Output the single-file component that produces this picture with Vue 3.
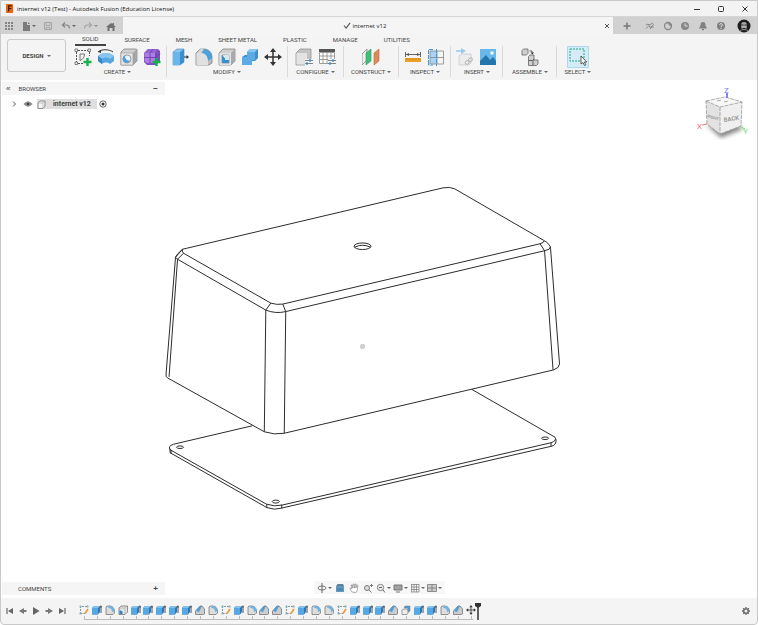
<script setup>
const quick = [
  { id: 'grid', label: 'Data panel' },
  { id: 'file', label: 'File', drop: true },
  { id: 'save', label: 'Save', dim: true },
  { id: 'undo', label: 'Undo', drop: true },
  { id: 'redo', label: 'Redo', drop: true, dim: true },
  { id: 'home', label: 'Home' },
]
const status = [
  { id: 'plus', label: 'New design' },
  { id: 'extensions', label: 'Extensions' },
  { id: 'online', label: 'Online status' },
  { id: 'clock', label: 'Job status' },
  { id: 'bell', label: 'Notifications' },
  { id: 'help', label: 'Help' },
]
const workspaces = ['SOLID', 'SURFACE', 'MESH', 'SHEET METAL', 'PLASTIC', 'MANAGE', 'UTILITIES']
const groups = [
  { name: 'CREATE', icons: ['sketch', 'revolve', 'hole', 'form'], tight: true },
  { name: 'MODIFY', icons: ['press', 'fillet', 'shell', 'combine', 'move'], tight: true },
  { name: 'CONFIGURE', icons: ['config', 'table'] },
  { name: 'CONSTRUCT', icons: ['plane'] },
  { name: 'INSPECT', icons: ['measure', 'section'], tight: true },
  { name: 'INSERT', icons: ['derive', 'image'], tight: true },
  { name: 'ASSEMBLE', icons: ['joint'] },
  { name: 'SELECT', icons: ['select'], tight: true },
]
const nav = [
  { id: 'orbit', drop: true },
  { id: 'look' },
  { id: 'hand' },
  { id: 'zoom' },
  { id: 'fit', drop: true },
  { id: 'display', drop: true },
  { id: 'gridset', drop: true },
  { id: 'views', drop: true },
]
const playback = ['first', 'prev', 'play', 'next', 'last']
const kinds = { s: 't-sketch', e: 't-extrude', f: 't-fillet', h: 't-shell', c: 't-chamfer', o: 't-offset', m: 'move' }
const features = [...'sefheeeeecfsefccseffseeecoeefcm'].map((k) => kinds[k])
</script>

<template>
  <div class="window">
    <svg class="defs" aria-hidden="true">
      <symbol id="grid" viewBox="0 0 10 10"><path d="M1 1h2v2H1zM4 1h2v2H4zM7 1h2v2H7zM1 4h2v2H1zM4 4h2v2H4zM7 4h2v2H7zM1 7h2v2H1zM4 7h2v2H4zM7 7h2v2H7z" fill="#858585" /></symbol>
      <symbol id="file" viewBox="0 0 10 10"><path d="M2 1h4v3h3v6H2z M7 1l2 2H7z" fill="#7b7b7b" /></symbol>
      <symbol id="save" viewBox="0 0 10 10"><path d="M1.500 1.500h7v7h-7zM3 1.500v3h4v-3M3 8.500v-2h4v2" fill="none" stroke="#8a8a8a" /></symbol>
      <symbol id="undo" viewBox="0 0 10 10"><path d="M1.500 4H6q2.500.5 2.500 3.500M4 1.500L1.500 4 4 6.500" fill="none" stroke="#858585" stroke-width="1.200" /></symbol>
      <symbol id="redo" viewBox="0 0 10 10"><path d="M8.500 4H4Q1.500 4.500 1.500 7.500M6 1.500L8.500 4 6 6.500" fill="none" stroke="#8a8a8a" stroke-width="1.200" /></symbol>
      <symbol id="home" viewBox="0 0 10 10"><path d="M0 6l5-4 1.500 1.200V2H8v2.400L10 6H8.500v4h-2V7h-3v3h-2V6z" fill="#707070" /></symbol>
      <symbol id="plus" viewBox="0 0 10 10"><path d="M5 1.500v7M1.500 5h7" stroke="#777" stroke-width="1.500" /></symbol>
      <symbol id="extensions" viewBox="0 0 10 10"><path d="M1 4l2-1 1 1 4-2M1 7.500l3-3 1 2 4-3M5 8l2-2h2" fill="none" stroke="#888" /></symbol>
      <symbol id="online" viewBox="0 0 10 10"><circle cx="5" cy="5" r="3.500" fill="none" stroke="#888" stroke-width="1.300" /><path d="M4 1.500h2.500l2 2V6L6 4z" fill="#888" /></symbol>
      <symbol id="clock" viewBox="0 0 10 10"><circle cx="5" cy="5" r="4" fill="#888" /><path d="M5 2.500V5h2.500" fill="none" stroke="#ddd" /></symbol>
      <symbol id="bell" viewBox="0 0 10 10"><path d="M5 1c2 0 2.500 1.500 2.500 3.500L9 7.500H1l1.500-3C2.500 2.500 3 1 5 1zM4 8h2v1.300H4z" fill="#808080" /></symbol>
      <symbol id="help" viewBox="0 0 10 10"><circle cx="5" cy="5" r="4" fill="#808080" /><path d="M3.700 4c0-2 2.800-1.800 2.600 0C6.200 5 5 5 5 6.200M5 7v1" fill="none" stroke="#e5e5e5" /></symbol>

      <symbol id="sketch" viewBox="0 0 18 18"><path d="M2.500 4v10M4 2.500h10M15.500 4v4M4 15.500h5" fill="none" stroke="#555" stroke-dasharray="2 1" /><path d="M1 1h2.500v2.500H1zM14 1h2.500v2.500H14zM1 14h2.500v2.500H1z" fill="#f4f4f4" stroke="#555" stroke-width=".7" /><path d="M6 12.500V6h4.500c0 3-1.500 5.500-4.500 6.500z" fill="none" stroke="#555" stroke-width=".8" /><path d="M13.500 10v8M9.500 14h8" stroke="#16b04c" stroke-width="2.400" /></symbol>
      <symbol id="revolve" viewBox="0 0 18 18"><path d="M1 4C4 1 12 1 16 4" fill="none" stroke="#333" /><path d="M1 4l3-2v3z" fill="#333" /><path d="M1 8c4-4 12-4 16 0v5l-4 3c-2-2-6-2-8 0l-4-3z" fill="#55a7e2" /><path d="M1 8c4-4 12-4 16 0l-4 3c-2-2-6-2-8 0z" fill="#86c6f0" /><path d="M1 8l4 3v5l-4-3z" fill="#3a86c4" /></symbol>
      <symbol id="hole" viewBox="0 0 18 18"><path d="M1 4l3-3h12q1 0 1 1v11l-4 4H1z" fill="#d0d0d0" stroke="#777" stroke-width=".7" /><path d="M13 5l4-4v12l-4 4z" fill="#a5a5a5" /><path d="M1 5h12v12H1z" fill="#e3e3e3" stroke="#888" stroke-width=".5" /><circle cx="7" cy="11" r="4" fill="#eaf5fc" stroke="#777" stroke-width=".7" /><path d="M5 7.500a3.800 3.800 0 1 0 5 5Q5 13 5 7.500z" fill="#4ba1df" /></symbol>
      <symbol id="form" viewBox="0 0 18 18"><path d="M1 5l4-4h10l2 2v10l-4 4H4l-3-3z" fill="#7d4fc0" /><path d="M1.500 5h11v10h-9l-2-2z" fill="#ae7de4" /><path d="M2 5l3-4h10l-3 4z" fill="#9365d2" /><path d="M1 9.500h12l4-4M7 15V5l3-4M12.700 5v11" fill="none" stroke="#6538aa" stroke-width=".8" /><path d="M13.500 10v8M9.500 14h8" stroke="#16b04c" stroke-width="2.400" /></symbol>
      <symbol id="press" viewBox="0 0 18 18"><path d="M1 4l4-3h7v13l-4 3H1z" fill="#8bc8f1" stroke="#4387b8" stroke-width=".6" /><path d="M1 4h7v13H1z" fill="#6ab5e9" /><path d="M8 4l4-3v13l-4 3z" fill="#3c8ecd" /><path d="M12 9h3" stroke="#333" stroke-width="1" /><path d="M14.500 7L17 9l-2.500 2z" fill="#333" /></symbol>
      <symbol id="fillet" viewBox="0 0 18 18"><path d="M1 5l4-4h4c5 0 8 4 8 8v6l-3 2H1z" fill="#bdbdbd" stroke="#777" stroke-width=".7" /><path d="M1.500 5H6c4 0 7 3 7 7v5H1.500z" fill="#e0e0e0" /><path d="M8 1h1c5 0 8 4 8 8v1l-4 3c0-5-3-8-6-8z" fill="#4ba1dd" /><path d="M5 1h4L6 5H2z" fill="#d5d5d5" /></symbol>
      <symbol id="shell" viewBox="0 0 18 18"><path d="M1 5l4-4h12v12l-4 4H1z" fill="#cfcfcf" stroke="#777" stroke-width=".7" /><path d="M13 5l4-4v12l-4 4z" fill="#aaa" /><path d="M1.500 5h11.500v12H1.500z" fill="#e3e3e3" /><path d="M4 7h7v8H4z" fill="#fff" stroke="#777" stroke-width=".6" /><path d="M4 7l3 3v2h4v3H4z" fill="#3491d2" /><path d="M7 7h4v5H7z" fill="#d2eaf9" /></symbol>
      <symbol id="combine" viewBox="0 0 18 18"><path d="M6 4l3-3h8v9l-3 3h-3v1l-3 3H1V9l3-2h2z" fill="#3f8fce" /><path d="M6 4h8v8h-3v5H1V9h5z" fill="#5cabe4" /><path d="M6 4l3-3h8l-3 3z" fill="#8ac6f1" /></symbol>
      <symbol id="move" viewBox="0 0 18 18"><path d="M9 2v14M2 9h14" stroke="#333" stroke-width="1.500" /><path d="M9 0l3 4H6zM9 18l3-4H6zM0 9l4-3v6zM18 9l-4-3v6z" fill="#333" /></symbol>
      <symbol id="config" viewBox="0 0 18 18"><path d="M1 5l4-4h11v12l-3 4H1z" fill="#c3c3c3" stroke="#888" stroke-width=".7" /><path d="M1.500 5H12v11.500H1.500z" fill="#e3e3e3" /><path d="M10 11h8v7h-8z" fill="#f4f4f4" /><path d="M10 12.500h8M10 15.500h8" stroke="#666" stroke-width=".8" /><path d="M15 11v3M12 14v3" stroke="#348fd0" stroke-width="1.300" /></symbol>
      <symbol id="table" viewBox="0 0 18 18"><path d="M1 1h16v3H1z" fill="#555" /><path d="M1.500 4.500h15v11h-15zM1.500 8h15M1.500 11.500h15M5 4.500v11M9 4.500v11M13 4.500v11" fill="#fff" stroke="#888" stroke-width=".8" /><path d="M10 11h8v7h-8z" fill="#f4f4f4" /><path d="M10 12.500h8M10 15.500h8" stroke="#666" stroke-width=".8" /><path d="M15 11v3M12 14v3" stroke="#348fd0" stroke-width="1.300" /></symbol>
      <symbol id="plane" viewBox="0 0 18 18"><path d="M0 6l5-5v11l-5 5z" fill="#efefef" stroke="#777" stroke-width=".7" /><path d="M4 5l5-4v12l-5 4z" fill="#3fc078" stroke="#33945f" stroke-width=".6" /><path d="M12 5l5-4v12l-5 4z" fill="#dd8b58" stroke="#b87043" stroke-width=".6" /></symbol>
      <symbol id="measure" viewBox="0 0 18 18"><path d="M1.500 4v5M16.500 4v5M2 6.500h14" stroke="#555" stroke-width=".9" /><path d="M2 6.500L5 5v3zM16 6.500L13 5v3z" fill="#555" /><path d="M1 10h16v4H1z" fill="#e9a227" /><path d="M3 10v2M6 10v2M9 10v2M12 10v2M15 10v2" stroke="#b87800" stroke-width=".6" /></symbol>
      <symbol id="section" viewBox="0 0 18 18"><path d="M3 3h7v13H3z" fill="#a6d4f4" /><path d="M3 3h13.500v13H3zM10 3v13M3 9.500h14" fill="none" stroke="#888" stroke-width=".8" /><path d="M6 1.500H1.500V16M1.500 14v3H6M9.500 1v17" fill="none" stroke="#3c98dc" stroke-dasharray="4 1" /></symbol>
      <symbol id="derive" viewBox="0 0 18 18"><path d="M3 8l3-2h9v9l-2 2H3z" fill="#ececec" stroke="#ccc" stroke-width=".8" /><path d="M0 3h7" stroke="#9acbef" stroke-width="1.600" /><path d="M5 0l5 3-5 3z" fill="#9acbef" /><rect x="9" y="13" width="4" height="3" rx="1.300" fill="#f3f3f3" stroke="#b5b5b5" transform="rotate(-35 11 14)" /><rect x="12.500" y="10.500" width="4" height="3" rx="1.300" fill="none" stroke="#b5b5b5" transform="rotate(-35 14 12)" /></symbol>
      <symbol id="image" viewBox="0 0 18 18"><path d="M1 1h16v16H1z" fill="#69b8ea" /><circle cx="13" cy="5" r="1.800" fill="#f5fcff" /><path d="M1 13l6-6 4 5 3-3 3 4v4H1z" fill="#2376ac" /></symbol>
      <symbol id="joint" viewBox="0 0 18 18"><path d="M1 2.500L2.500 1H7v4.500L5.500 7H1zM7.500 8.500L9 7h4v5h4v4l-1.500 1.500h-8z" fill="#cecece" stroke="#666" stroke-width=".8" /><path d="M7.500 12.500h4l1.500-1.500M12 12v5.500M8.500 3H11v2" fill="none" stroke="#555" stroke-width=".9" /><path d="M9.500 4.500h3.500l-1.700 2z" fill="#333" /></symbol>
      <symbol id="select" viewBox="0 0 22 22"><path d="M.5.5h21v21H.5z" fill="#d3ecf7" stroke="#acd8ec" /><path d="M3 3h14v12H3z" fill="none" stroke="#23a87f" stroke-dasharray="2 1" /><path d="M14 10v8l2-1.500 1.500 3 1.300-.7-1.500-2.800h2.500z" fill="#fff" stroke="#333" stroke-width=".8" /></symbol>

      <symbol id="orbit" viewBox="0 0 10 10"><ellipse cx="5" cy="5" rx="4" ry="2" fill="none" stroke="#777" /><path d="M5 0v10" stroke="#666" /></symbol>
      <symbol id="look" viewBox="0 0 10 10"><path d="M1 3h8v6H1z" fill="#6b9abb" /><path d="M1 3l2-2h5l1 2zM2 5h6v3H2z" fill="#4889b6" /><path d="M3 1v3M7 1v3" stroke="#777" /></symbol>
      <symbol id="hand" viewBox="0 0 10 10"><path d="M3 9L.800 5.500l1-.5L3 6 2 2h1l1 3V1h1l.5 4 .7-4h1l-.3 4 1.300-3 .8.500L8 8l-1 1.500z" fill="#fff" stroke="#888" stroke-width=".7" /></symbol>
      <symbol id="zoom" viewBox="0 0 10 10"><circle cx="4" cy="5" r="2.500" fill="#ddd" stroke="#777" /><path d="M6 7l2.500 2.500M8.500 1v3M7 2.500h3" stroke="#777" /></symbol>
      <symbol id="fit" viewBox="0 0 10 10"><circle cx="4.500" cy="4.500" r="3.200" fill="#e8e8e8" stroke="#888" /><path d="M3 4.500h3M7 7l2 2.500" stroke="#666" /></symbol>
      <symbol id="display" viewBox="0 0 10 10"><path d="M1 2h8v5H1z" fill="#a2a2a2" stroke="#777" /><path d="M3 9h4" stroke="#777" /></symbol>
      <symbol id="gridset" viewBox="0 0 10 10"><path d="M1 1.500h8M1 4h8M1 6.500h8M1.500 1v8M4 1v8M6.500 1v8M9 1v8M1 9h8" fill="none" stroke="#888" stroke-width=".8" /></symbol>
      <symbol id="views" viewBox="0 0 10 10"><path d="M.500 1.500h9v7h-9zM5 1.500v7M.500 5h9" fill="#ccc" stroke="#777" stroke-width=".8" /></symbol>

      <symbol id="first" viewBox="0 0 10 10"><path d="M2 2v6" stroke="#666" stroke-width="1.200" /><path d="M8 2v6L3 5z" fill="#666" /></symbol>
      <symbol id="prev" viewBox="0 0 10 10"><path d="M6 2v6L1 5zM6 4h2.500v2H6z" fill="#777" /></symbol>
      <symbol id="play" viewBox="0 0 10 10"><path d="M2 1v8l6.500-4z" fill="#666" /></symbol>
      <symbol id="next" viewBox="0 0 10 10"><path d="M4 2v6l5-3zM1.500 4H4v2H1.500z" fill="#777" /></symbol>
      <symbol id="last" viewBox="0 0 10 10"><path d="M8 2v6" stroke="#666" stroke-width="1.200" /><path d="M2 2v6l5-3z" fill="#666" /></symbol>

      <symbol id="t-sketch" viewBox="0 0 10 10"><path d="M1.500 9V1.500H9M1.500 8.500H6" fill="none" stroke="#777" stroke-width=".8" stroke-dasharray="2 1" /><path d="M.5.5h2v2h-2zM7.500.5h2v2h-2zM.5 7.500h2v2h-2z" fill="#7db4c9" /><path d="M9 4L6 8.500" stroke="#ee9b35" stroke-width="1.700" /></symbol>
      <symbol id="t-extrude" viewBox="0 0 10 10"><path d="M0 3l2-2h6v6L6 9.500H0z" fill="#2d78b8" /><path d="M0 3h6v6.500H0z" fill="#55a8e4" /><path d="M0 3l2-2h6L6 3z" fill="#83c1ed" /><path d="M9 1v7" stroke="#555" /><path d="M7.500 2.500L9 0l1 2.500z" fill="#555" /></symbol>
      <symbol id="t-fillet" viewBox="0 0 10 10"><path d="M1 2l1-1h3c3 0 4.500 3 4.500 5v2L8 9.500H1z" fill="#ddd" stroke="#777" stroke-width=".8" /><path d="M4 1h1c3 0 4.500 3 4.500 5L7 7C7 4 6 3 3 3z" fill="#6fb3e2" /></symbol>
      <symbol id="t-shell" viewBox="0 0 10 10"><path d="M1 3l2-2h6.500v6L7 9.500H1z" fill="#e3e3e3" stroke="#777" stroke-width=".8" /><path d="M1.500 5l3 1.500v2.500h-3z" fill="#3184c4" /><path d="M1 3h6v6M7 3l2-2" fill="none" stroke="#999" stroke-width=".5" /></symbol>
      <symbol id="t-chamfer" viewBox="0 0 10 10"><path d="M.5 6L5 1h2l2.500 3v5l-1 .5h-8z" fill="#ccc" stroke="#777" stroke-width=".8" /><path d="M1 6l4-5h2L4 7z" fill="#4b9edb" /></symbol>
      <symbol id="t-offset" viewBox="0 0 10 10"><path d="M1 5l2-1h4v4L6 9.500H1z" fill="#eee" stroke="#888" stroke-width=".8" /><path d="M4 1h5v5L7 7V3H3z" fill="#4f9fd9" stroke="#777" stroke-width=".5" /></symbol>
      <symbol id="gear" viewBox="0 0 10 10"><path d="M5 1v8M1 5h8M2.200 2.200l5.600 5.600M7.800 2.200L2.200 7.800" stroke="#666" stroke-width="1.300" /><circle cx="5" cy="5" r="2.200" fill="#f4f4f4" stroke="#666" stroke-width="1.300" /></symbol>
    </svg>

    <header class="titlebar">
      <svg class="logo" viewBox="0 0 9 10"><rect width="8" height="10" rx="1" fill="#e26710" /><path d="M3 8V2h3.500M3 5h3" fill="none" stroke="#3a1b08" stroke-width="1.400" /></svg>
      <h1>internet v12 (Test) - Autodesk Fusion (Education License)</h1>
      <div class="controls">
        <button aria-label="Minimize"><svg viewBox="0 0 8 8"><path d="M1 4.500h6" /></svg></button>
        <button aria-label="Maximize"><svg viewBox="0 0 8 8"><rect x="1.500" y="1.500" width="5" height="5" rx="1" /></svg></button>
        <button aria-label="Close"><svg viewBox="0 0 8 8"><path d="M1.500 1.500l5 5M6.500 1.500l-5 5" /></svg></button>
      </div>
    </header>

    <div class="docbar">
      <div class="quick">
        <button v-for="q in quick" :key="q.id" :class="[q.id, { dim: q.dim }]" :aria-label="q.label">
          <svg class="i10"><use :href="'#' + q.id" /></svg><i v-if="q.drop" class="caret" />
        </button>
      </div>
      <div class="doctab">
        <span class="docname"><svg viewBox="0 0 9 8"><path d="M1 4l2.500 3L8 1" fill="none" stroke="#555" stroke-width="1.300" /></svg>internet v12</span>
        <button aria-label="Close tab"><svg viewBox="0 0 8 8"><path d="M2 2l4 4M6 2L2 6" stroke="#555" /></svg></button>
      </div>
      <div class="status">
        <button v-for="s in status" :key="s.id" :class="s.id" :aria-label="s.label"><svg class="i10"><use :href="'#' + s.id" /></svg></button>
        <button class="avatar" aria-label="Account">
          <svg viewBox="0 0 14 14"><circle cx="7" cy="7" r="6.500" fill="#1d1d1d" /><path d="M4 6c0-4 6-4 6 0 0 3-1 5-3 5S4 9 4 6z" fill="#aaa" /><path d="M4 6h2.500M7.500 6H10M5.500 9.500h3" stroke="#222" /><path d="M3 12c2-2 6-2 8 0" stroke="#888" fill="none" /></svg>
        </button>
      </div>
    </div>

    <div class="toolbar">
      <button class="design">DESIGN<i class="caret" /></button>
      <div class="ribbon">
        <nav class="workspaces">
          <button v-for="(w, i) in workspaces" :key="w" :class="{ active: i === 0 }">{{ w }}</button>
        </nav>
        <div class="groups">
          <section v-for="g in groups" :key="g.name" :class="{ tight: g.tight }">
            <div class="icons">
              <button v-for="ic in g.icons" :key="ic" :aria-label="ic"><svg :class="ic === 'select' ? 'i22' : 'i18'"><use :href="'#' + ic" /></svg></button>
            </div>
            <button class="name">{{ g.name }}<i class="caret" /></button>
          </section>
        </div>
      </div>
    </div>

    <main class="canvas">
      <svg class="model" viewBox="0 80 758 518" fill="none" stroke="#2b2b2b" stroke-width="1">
        <path d="M182 249L443 187.500q7-1.500 12 1L544 240q7 4 7 8L560 364q0 4-6 6L284 433.500q-10 2-20-1.500L167 378q-2-1-1.500-4L175 257q1-3 7-8z" />
        <path d="M175 257q1 2 2 2L265.500 310q10 4 20 1.500L545 250.500q6-1 6-4" />
        <path d="M182 249q-1 2 1 4L270.500 303q6 2 12 1L540.500 243.500q4-1 4-3" />
        <path d="M183 253L177 259L168.500 377M270.500 303L265.500 310L264 432M282.500 304L285.500 311.500L284 433.500M540.500 243.500L545 250.500L553.500 370M175 257l7-8" />
        <ellipse cx="362.500" cy="246" rx="8.500" ry="3.300" />
        <path d="M354.500 247q8-4 16 0" />
        <path d="M252 426L173 444.500q-6 2-3.500 5.500L266 504.500q8 3 16 1L551.500 443q6-2 4-5.500L472 389.500" />
        <path d="M169.500 449v4l97 55q8 3 15 .500L552 446.500q5-1 4.500-7M266.500 504.500v4M281.500 505v4M551.500 443v4M170.500 450v4" />
        <ellipse cx="179.500" cy="447.500" rx="3.500" ry="1.300" />
        <ellipse cx="275.500" cy="502" rx="3.500" ry="1.500" />
        <ellipse cx="545.500" cy="438.500" rx="3.500" ry="1.300" />
        <circle cx="362.500" cy="346.500" r="2.300" fill="#d0d0d0" stroke="#b5b5b5" stroke-width=".5" />
      </svg>

      <section class="panel">
        <header><button aria-label="Collapse">«</button><h2>BROWSER</h2><button class="end" aria-label="Hide">−</button></header>
        <div class="node">
          <svg class="chev" viewBox="0 0 6 8"><path d="M2 1.500L4.500 4 2 6.500" fill="none" stroke="#555" /></svg>
          <svg class="eye" viewBox="0 0 10 8"><path d="M.500 4Q5-1.500 9.500 4 5 9.500.500 4z" fill="#888" /><circle cx="5" cy="4" r="2" fill="#444" stroke="#ccc" stroke-width=".6" /></svg>
          <span class="chip"><svg viewBox="0 0 9 9"><path d="M1 3l2-2h5v5L6 8.500H1z" fill="#f4f4f4" stroke="#777" stroke-width=".8" /><path d="M6 3v5M1 3h5l2-2" fill="none" stroke="#aaa" stroke-width=".6" /></svg><b>internet v12</b></span>
          <svg class="radio" viewBox="0 0 8 8"><circle cx="4" cy="4" r="3.200" fill="#fff" stroke="#444" stroke-width=".8" /><circle cx="4" cy="4" r="1.500" fill="#333" /></svg>
        </div>
      </section>

      <svg class="cube" viewBox="696 84 56 58">
        <defs><filter id="soft"><feGaussianBlur stdDeviation="2" /></filter></defs>
        <path d="M707 125l14 13 22-9-6-5z" fill="#888" filter="url(#soft)" />
        <path d="M706 101l19-4 17 5-22 5z" fill="#f8f8f8" /><path d="M706 101l14 6v27l-13-10z" fill="#e2e2e2" /><path d="M720 107l22-5-1 24-21 8z" fill="#efefef" />
        <path d="M706 101l19-4 17 5-1 24-21 8-13-10zM706 101l14 6 22-5M720 107v27M717 101l5-1M724 102l5-1" fill="none" stroke="#999" stroke-width=".8" stroke-dasharray="4 1" />
        <path d="M727 93v5" stroke="#8181f5" stroke-width="2" /><path d="M702 125l5-1" stroke="#ed7474" /><path d="M741 127l4 2" stroke="#70de70" />
        <text x="724" y="93" fill="#7878ee" class="axis">Z</text><text x="697" y="129" fill="#ee7373" class="axis">X</text><text x="743" y="134" fill="#73e273" class="axis">Y</text>
        <text x="724" y="122" class="face" transform="rotate(-9 724 122)">BACK</text><text x="707" y="117" class="face side" transform="rotate(18 707 117)">RIGHT</text>
      </svg>

      <section class="panel comments"><header><h2>COMMENTS</h2><button class="end" aria-label="Add comment">+</button></header></section>
      <div class="viewnav">
        <button v-for="n in nav" :key="n.id" :aria-label="n.id"><svg class="i10"><use :href="'#' + n.id" /></svg><i v-if="n.drop" class="caret" /></button>
      </div>
    </main>

    <footer class="timeline">
      <div class="playback">
        <button v-for="p in playback" :key="p" :aria-label="p"><svg class="i10"><use :href="'#' + p" /></svg></button>
      </div>
      <div class="track">
        <button v-for="(f, i) in features" :key="i" :aria-label="f"><svg class="i10"><use :href="'#' + f" /></svg></button>
      </div>
      <svg class="marker" viewBox="0 0 8 18"><path d="M1 1h6v3L4 6 1 4z" fill="#333" /><path d="M4 4v14" stroke="#333" stroke-width="1.500" /></svg>
      <button class="settings" aria-label="Settings"><svg class="i10"><use href="#gear" /></svg></button>
    </footer>
  </div>
</template>

<style>
body { margin: 0; }
</style>

<style scoped>
* { box-sizing: border-box; }
.window { display: flex; flex-direction: column; min-height: 100vh; background: #f4f4f4; border: 1px solid #c9c9c9; border-radius: 0 0 4px 4px; font: 6px/10px Roboto, sans-serif; color: #444; }
.defs { position: absolute; width: 0; height: 0; }
button { display: flex; align-items: center; justify-content: center; padding: 0; border: 0; background: none; font: inherit; color: inherit; }
svg { display: block; flex: none; }
h1, h2 { margin: 0; font: inherit; }
.i10 { width: 10px; height: 10px; }
.i18 { width: 18px; height: 18px; }
.i22 { width: 22px; height: 22px; }
.caret { border: 2px solid transparent; border-top-color: #666; border-bottom: 0; margin-left: 3px; }

.titlebar { display: flex; align-items: center; height: 16px; padding: 0 8px 0 5px; background: #f3f3f3; border-bottom: 1px solid #d6d6d6; }
.logo { width: 8px; height: 9px; }
.titlebar h1 { margin-left: 3px; font: 6px/10px "Open Sans", sans-serif; color: #111; }
.controls { display: flex; gap: 16px; margin-left: auto; }
.controls svg { width: 8px; height: 8px; fill: none; stroke: #333; }

.docbar { display: flex; height: 17px; background: #d1d1d1; }
.quick { display: flex; align-items: center; width: 122px; padding-left: 3px; }
.quick button { margin-right: 7px; }
.quick .caret { margin-left: 1px; }
.quick .save { margin-right: 8px; }
.quick .dim { opacity: .6; }
.quick .home { width: 12px; margin: 0; }
.doctab { display: flex; flex: 1; align-items: center; background: #f5f5f5; color: #222; font: 6px/10px "Open Sans", sans-serif; }
.docname { display: flex; flex: 1; align-items: center; justify-content: center; gap: 2px; padding-left: 3px; }
.docname svg { width: 8px; height: 7px; }
.doctab button svg { width: 8px; height: 8px; margin-right: 2px; }
.status { display: flex; align-items: center; justify-content: space-between; width: 144px; padding: 0 6px 0 9px; }
.status .plus { margin-right: 5px; }
.status .avatar { margin-left: 3px; }
.avatar svg { width: 14px; height: 14px; }

.toolbar { display: flex; height: 46px; padding-left: 6px; }
.design { width: 59px; height: 33px; margin-top: 5px; border: 1px solid #c9c9c9; border-radius: 3px; font-weight: bold; }
.ribbon { flex: 1; padding-left: 3px; }
.workspaces { display: flex; gap: 26px; height: 12px; padding-left: 6px; }
.workspaces button { white-space: nowrap; }
.workspaces .active { padding: 0 7px; margin-right: -7px; border-bottom: 2px solid #444; }
.groups { display: flex; }
.groups section { display: flex; flex-direction: column; align-items: center; height: 31px; min-width: 54px; padding: 0 7px; }
.groups section.tight { min-width: 42px; padding: 0 5px; }
.groups section + section { border-left: 1px solid #dadada; }
.icons { display: flex; align-items: center; gap: 5px; height: 21px; }
.name { height: 10px; white-space: nowrap; }
.name .caret { margin-left: 2px; }

.canvas { position: relative; flex: 1; display: flex; flex-direction: column; justify-content: space-between; background: #fff; }
.model { position: absolute; inset: 0; width: 100%; height: 100%; }
.panel { position: relative; width: 163px; margin: 2px 0 0 1px; }
.panel header { display: flex; align-items: center; height: 13px; padding: 0 7px 0 4px; background: #f5f5f5; }
.panel header h2 { margin-left: 8px; }
.panel header button { font: 8px/10px "Liberation Sans", sans-serif; }
.panel header .end { margin-left: auto; font-weight: bold; }
.node { display: flex; align-items: center; height: 18px; padding-left: 9px; }
.chev { width: 6px; height: 8px; }
.eye { width: 10px; height: 8px; margin: 0 4px 0 6px; }
.chip { display: flex; align-items: center; gap: 7px; height: 10px; padding: 0 6px 0 0; background: #dedede; }
.chip b { font: bold 7px/10px Roboto, sans-serif; }
.chip svg { width: 9px; height: 9px; }
.radio { width: 8px; height: 8px; margin-left: 2px; }
.cube { position: absolute; top: 4px; right: 5px; width: 56px; height: 58px; }
.axis { font: 8px Roboto, sans-serif; }
.face { font: bold 6px Roboto, sans-serif; fill: #999; }
.side { font-size: 4px; }
.comments { margin-bottom: 3px; }
.comments header h2 { margin-left: 12px; }
.viewnav { position: absolute; bottom: 4px; left: 50%; display: flex; gap: 2px; height: 13px; margin-left: -65px; padding: 0 3px; background: #f7f7f7; }
.viewnav button { min-width: 12px; }
.viewnav .caret { margin-left: 1px; }

.timeline { display: flex; align-items: center; height: 26px; padding: 0 6px 0 3px; }
.playback { display: flex; gap: 3px; width: 75px; padding-left: 1px; }
.playback button { width: 10px; }
.track { display: flex; justify-content: space-between; flex: 0 1 397px; height: 17px; }
.track button { position: relative; height: 17px; align-items: flex-start; padding-top: 2px; }
.track button::after { content: ""; position: absolute; bottom: 0; left: 5px; width: 13px; height: 3px; border: solid #bbb; border-width: 0 0 1px 1px; }
.track button:last-child::after { width: 1px; }
.marker { width: 8px; height: 18px; margin-left: -2px; }
.settings { margin-left: auto; }
</style>
